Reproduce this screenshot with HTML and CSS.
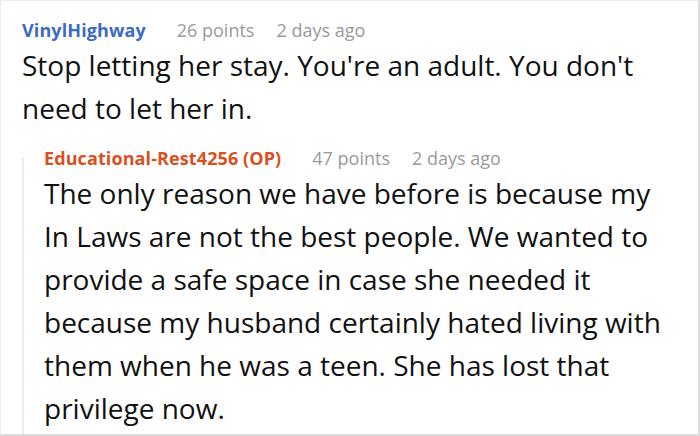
FILE: index.html
```html
<!DOCTYPE html>
<html>
<head>
<meta charset="utf-8">
<link rel="stylesheet" href="styles.css">
</head>
<body>
<div class="frame">
  <div class="comment">
    <div class="meta">
      <span class="user user-blue">VinylHighway</span>
      <span class="points">26 points</span>
      <span class="time">2 days ago</span>
    </div>
    <div class="text">Stop letting her stay. You're an adult. You don't need to let her in.</div>
  </div>
  <div class="comment reply">
    <div class="meta">
      <span class="user user-op">Educational-Rest4256 (OP)</span>
      <span class="points">47 points</span>
      <span class="time">2 days ago</span>
    </div>
    <div class="text">The only reason we have before is because my In Laws are not the best people. We wanted to provide a safe space in case she needed it because my husband certainly hated living with them when he was a teen. She has lost that privilege now.</div>
  </div>
</div>
</body>
</html>
```
FILE: styles.css
```css
html, body {
  margin: 0;
  padding: 0;
  background: #fff;
}
body {
  font-family: "Open Sans", "Noto Sans", sans-serif;
}
.frame {
  box-sizing: border-box;
  width: 700px;
  height: 436px;
  overflow: hidden;
  border-top: 1px solid #ececec;
  border-left: 1px solid #ececec;
  border-right: 2px solid #dedede;
  border-bottom: 2px solid #dedede;
  padding: 17px 0 0 21px;
}
.meta {
  display: flex;
  align-items: baseline;
  font-size: 18px;
  line-height: 24px;
  white-space: nowrap;
}
.user {
  font-weight: 700;
  letter-spacing: 0.1px;
  margin-right: 31px;
}
.user-blue { color: #3b6cbf; }
.user-op { color: #d9501e; }
.points {
  color: #9a9a9a;
  margin-right: 22px;
}
.time {
  color: #9a9a9a;
}
.text {
  font-size: 28px;
  line-height: 43px;
  color: #111;
  margin-top: 2px;
  width: 640px;
}
.reply {
  position: relative;
  margin-top: 16px;
  padding-left: 22px;
}
.reply::before {
  content: "";
  position: absolute;
  left: 0;
  top: 11px;
  bottom: -14px;
  width: 2px;
  background: #ececec;
}
.reply .text {
  width: 625px;
}
```
